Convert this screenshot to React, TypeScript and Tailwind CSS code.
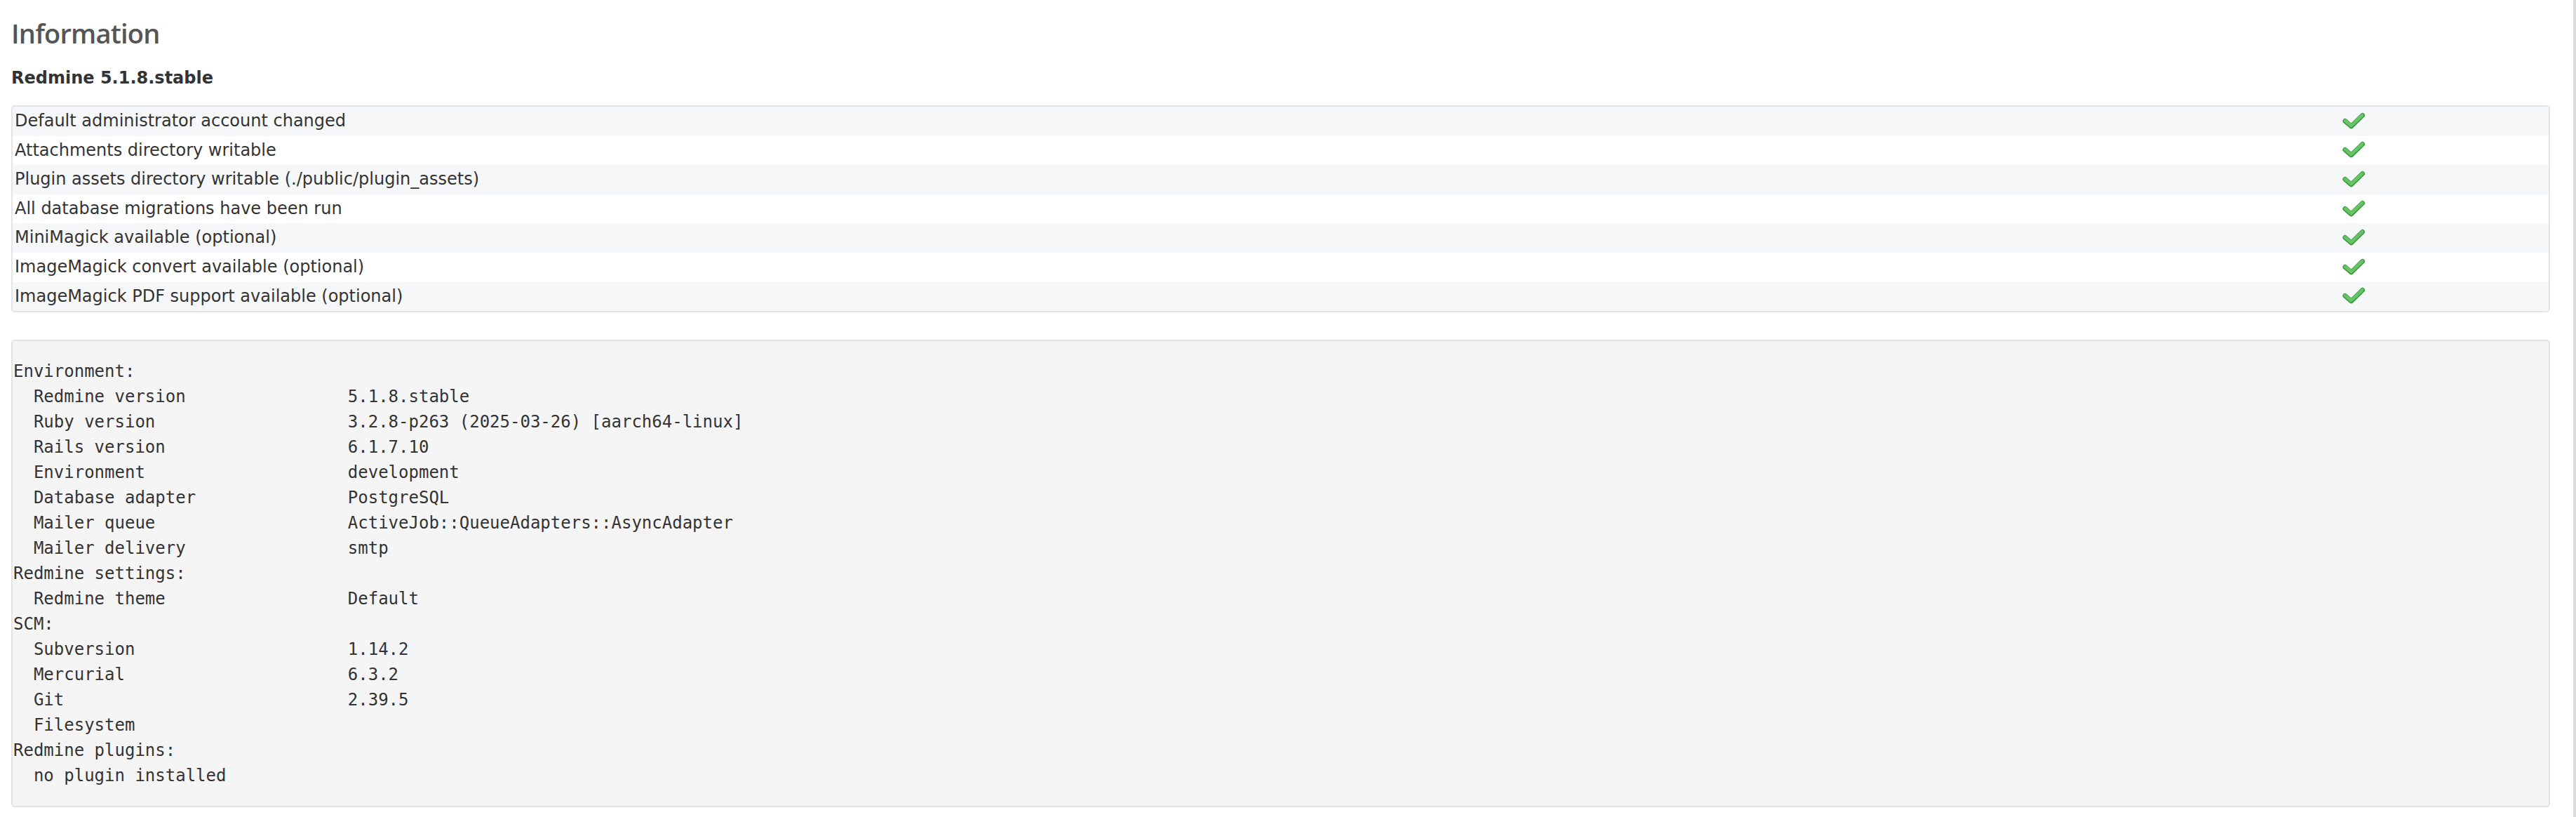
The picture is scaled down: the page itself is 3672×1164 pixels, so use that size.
import React from "react";

const checks = [
  "Default administrator account changed",
  "Attachments directory writable",
  "Plugin assets directory writable (./public/plugin_assets)",
  "All database migrations have been run",
  "MiniMagick available (optional)",
  "ImageMagick convert available (optional)",
  "ImageMagick PDF support available (optional)",
];

const envSections: { title: string; items: [string, string][] }[] = [
  {
    title: "Environment:",
    items: [
      ["Redmine version", "5.1.8.stable"],
      ["Ruby version", "3.2.8-p263 (2025-03-26) [aarch64-linux]"],
      ["Rails version", "6.1.7.10"],
      ["Environment", "development"],
      ["Database adapter", "PostgreSQL"],
      ["Mailer queue", "ActiveJob::QueueAdapters::AsyncAdapter"],
      ["Mailer delivery", "smtp"],
    ],
  },
  {
    title: "Redmine settings:",
    items: [["Redmine theme", "Default"]],
  },
  {
    title: "SCM:",
    items: [
      ["Subversion", "1.14.2"],
      ["Mercurial", "6.3.2"],
      ["Git", "2.39.5"],
      ["Filesystem", ""],
    ],
  },
  {
    title: "Redmine plugins:",
    items: [["no plugin installed", ""]],
  },
];

// builds the plain-text block the same way Redmine::Info does ("  %-30s %s")
const envText = envSections
  .map((s) =>
    [s.title, ...s.items.map(([k, v]) => (v ? "  " + k.padEnd(30) + " " + v : "  " + k))].join("\n")
  )
  .join("\n");

const Tick = () => (
  <svg width="32" height="32" viewBox="0 0 16 16" className="block">
    <polyline
      points="1.9,7.7 6.3,11.5 14.3,3.7"
      fill="none"
      stroke="#3f9a3f"
      strokeWidth="3.4"
      strokeLinejoin="round"
      strokeLinecap="round"
    />
    <polyline
      points="2,7.5 6.3,11.1 14.2,3.6"
      fill="none"
      stroke="#66c466"
      strokeWidth="2.2"
      strokeLinejoin="round"
      strokeLinecap="round"
    />
  </svg>
);

export default function App() {
  return (
    <div className="min-h-[1164px] w-full border-r-4 border-[#dcdcdc] bg-white pl-[16px] pr-[33px] pt-[23px] text-[#333] font-['DejaVu_Sans',sans-serif]">
      <h2 className="mb-[25px] text-[38px] leading-[48px] font-semibold tracking-[-0.8px] text-[#555] font-['Open_Sans',sans-serif]">
        Information
      </h2>

      <p className="mb-[24px] text-[24px] leading-[30px] font-bold">Redmine 5.1.8.stable</p>

      <div className="mb-[39px] overflow-hidden rounded-[5px] border-2 border-[#e4e4e4]">
        {checks.map((label, i) => (
          <div
            key={label}
            className={
              "grid grid-cols-[1fr_556px] text-[24px] leading-[41.6px] " +
              (i % 2 === 0 ? "bg-[#f6f7f8]" : "bg-white")
            }
          >
            <div className="pl-[3px]">{label}</div>
            <div className="flex items-center justify-center">
              <Tick />
            </div>
          </div>
        ))}
      </div>

      <pre className="rounded-[5px] border-2 border-[#e2e2e2] bg-[#f5f5f5] py-[25px] pl-[1px] text-[24px] leading-[36px] whitespace-pre font-['DejaVu_Sans_Mono',monospace]">
        {envText}
      </pre>
    </div>
  );
}
